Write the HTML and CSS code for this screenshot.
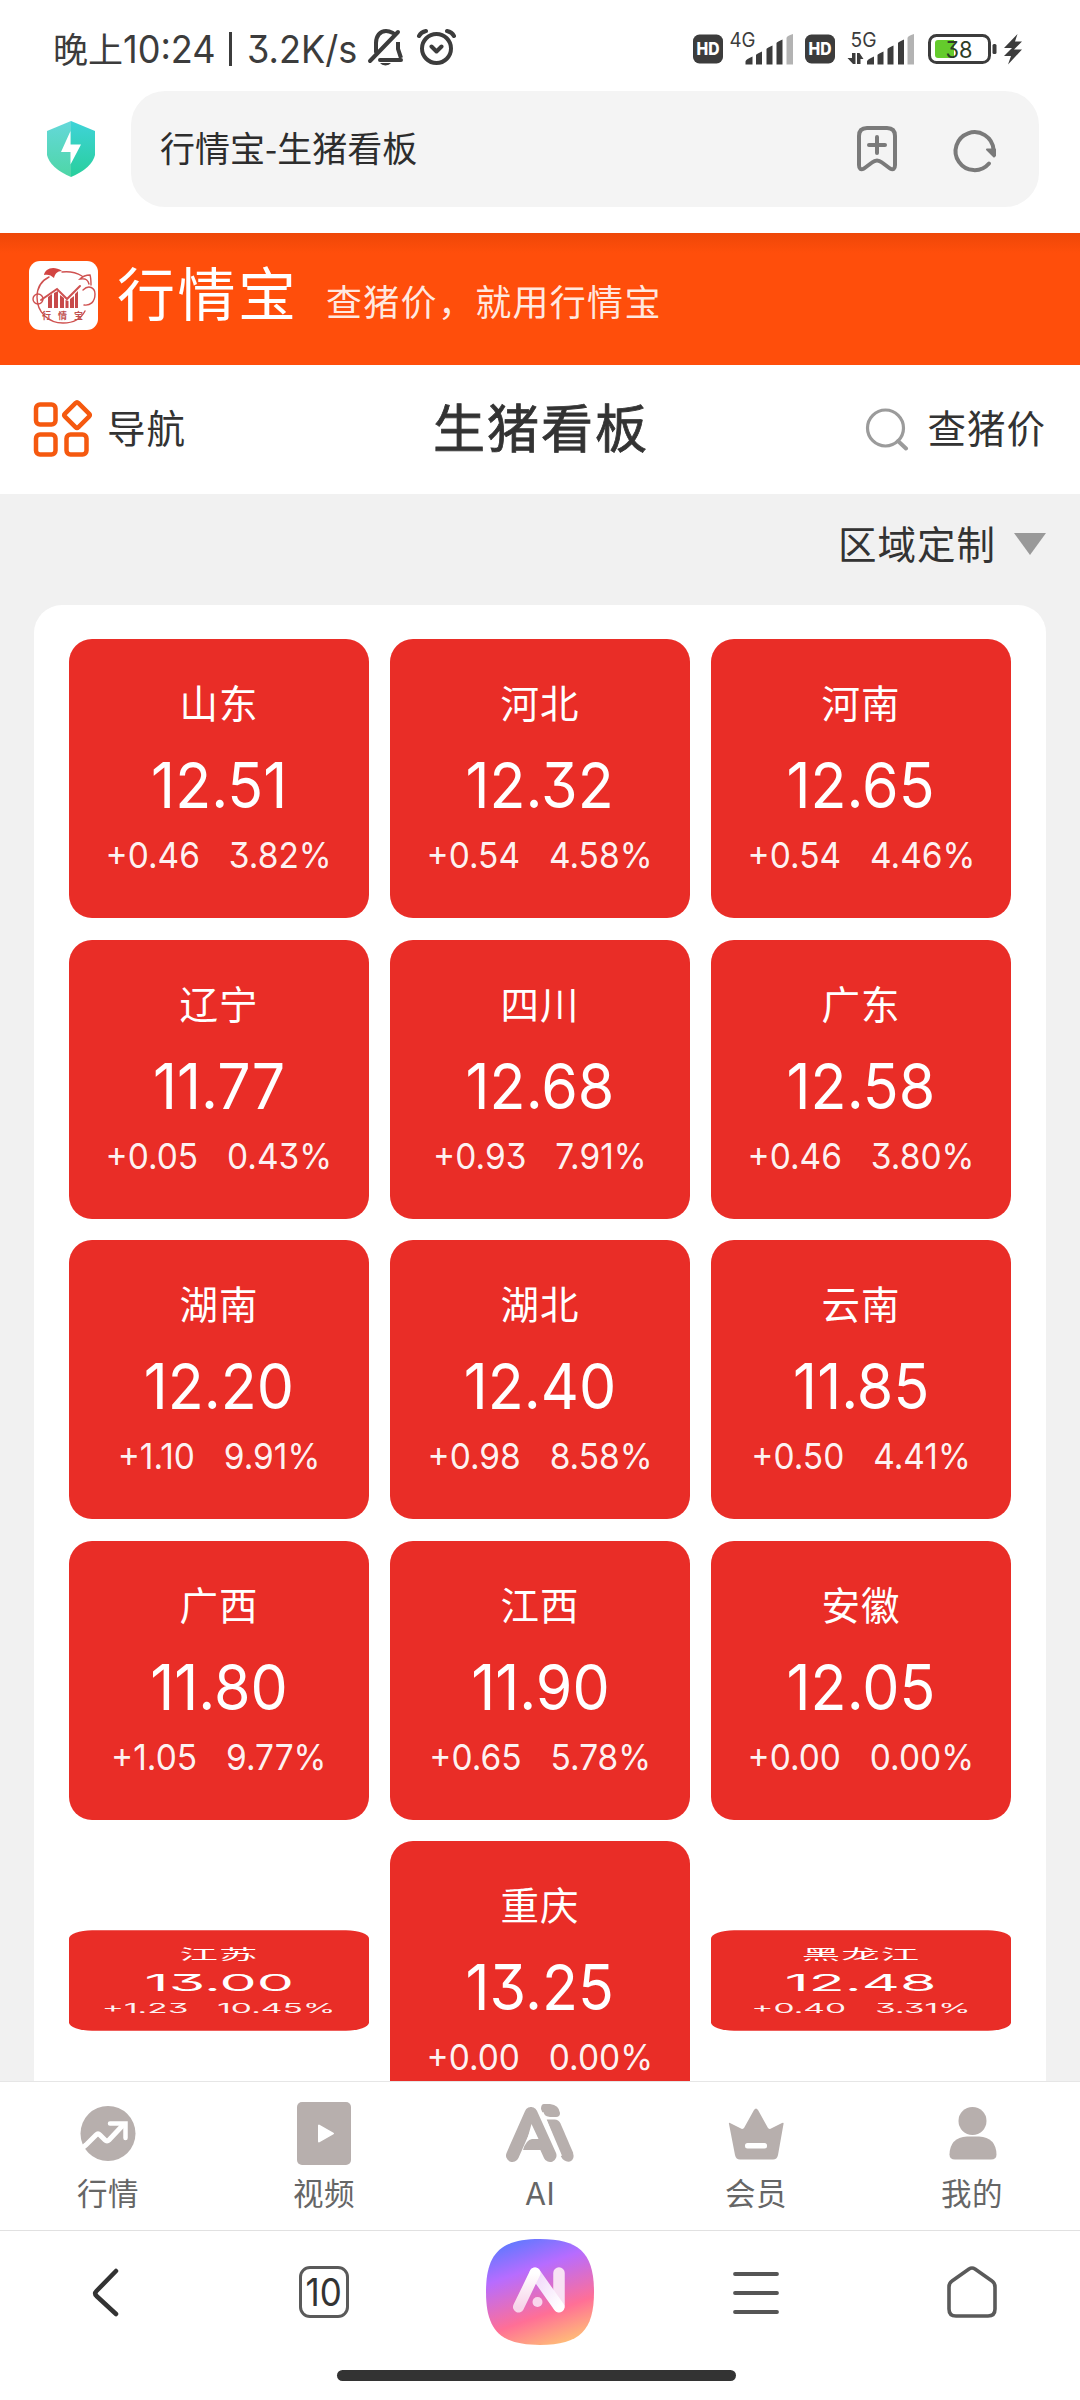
FILE: index.html
```html
<!DOCTYPE html>
<html lang="zh-CN">
<head>
<meta charset="utf-8">
<title>行情宝-生猪看板</title>
<link rel="stylesheet" href="styles.css">
</head>
<body>
<div class="screen">
  <div class="status">
    <div class="status-left">
      <span class="clock">晚上<span class="num">10:24</span></span><span class="divider"></span><span class="speed num">3.2K/s</span>
      <svg class="status-icons" width="90" height="42" viewBox="366 28 90 42" fill="none" stroke="#3c3c3c" stroke-width="4">
        <path d="M376 54V45c0-7 4-12 10-12 3 0 5 1 7 2M370 63l28-29M380 62h21" stroke-linecap="round"/>
        <path d="M398 44v7l3 9" stroke-width="4"/>
        <path d="M380 65h11a6 4 0 0 1-11 0z" fill="#3c3c3c" stroke="none"/>
        <circle cx="436.500" cy="50.500" r="14.500"/>
        <path d="M419 38q2-4 7-5M454 38q-2-4-7-5M431.500 48.500l5 5 5-5" stroke-linecap="round" stroke-linejoin="round"/>
      </svg>
    </div>
    <svg class="status-right" width="340" height="60" viewBox="690 20 340 60" fill="#3c3c3c">
      <rect x="693" y="34.500" width="30" height="29" rx="6.500"/>
      <text class="hd" x="708" y="55" textLength="23" lengthAdjust="spacingAndGlyphs">HD</text>
      <text class="net" x="729.500" y="47" textLength="26" lengthAdjust="spacingAndGlyphs">4G</text>
      <path d="M745.500 64.500v-3q0-2 7-5v8zM756 64.500V55q0-1 6-3.500v13zM766.500 64.500V49q0-1 6-3.500v19zM776.500 64.500V43q0-1 6-3.500v25z"/>
      <path d="M786.500 64.500V38q0-2 6.500-4v30.500z" fill="#b3b3b3"/>
      <rect x="805" y="34.500" width="30" height="29" rx="6.500"/>
      <text class="hd" x="820" y="55" textLength="23" lengthAdjust="spacingAndGlyphs">HD</text>
      <text class="net" x="850.500" y="47" textLength="26" lengthAdjust="spacingAndGlyphs">5G</text>
      <path d="M855.500 53v11h-2.500l-5.500-6h4.500v-5zM857 64V53h2.500l4 6h-3v5z"/>
      <path d="M867 64.500v-3q0-2 7-5v8zM877.500 64.500V55q0-1 6-3.500v13zM887.500 64.500V49q0-1 6-3.500v19zM898 64.500V43q0-1 6-3.500v25z"/>
      <path d="M907.500 64.500V38q0-2 6.500-4v30.500z" fill="#b3b3b3"/>
      <rect x="929.500" y="35.500" width="60" height="27" rx="7" fill="none" stroke="#3c3c3c" stroke-width="3"/>
      <rect x="992.500" y="44" width="4" height="10" rx="1.500"/>
      <path d="M938 40h16v18h-16q-3 0-3-3V43q0-3 3-3z" fill="#64cb2c"/>
      <text class="pct" x="945.500" y="57.500" textLength="27" lengthAdjust="spacingAndGlyphs">38</text>
      <path d="M1017.500 34l-13.500 14h8l-8 8h7l-3 8.500 14-15h-8l8-8h-7z"/>
    </svg>
  </div>

  <div class="address">
    <svg class="shield" width="50" height="58" viewBox="0 0 50 58">
      <defs>
        <linearGradient id="sl" x1="0" y1="0" x2="0" y2="1"><stop offset="0" stop-color="#64d8da"/><stop offset="1" stop-color="#4ed6a6"/></linearGradient>
        <linearGradient id="sr" x1="0" y1="0" x2="0" y2="1"><stop offset="0" stop-color="#3fd3d8"/><stop offset="1" stop-color="#28cf9c"/></linearGradient>
      </defs>
      <path d="M25 1L1 11v24q3 13 24 22z" fill="url(#sl)"/>
      <path d="M25 1l24 10v24q-3 13-24 22z" fill="url(#sr)"/>
      <path d="M24.500 11l-9.500 21h9.500v12.500L35 24.500H24.500z" fill="#fff"/>
    </svg>
    <div class="url">
      <span>行情宝-生猪看板</span>
      <svg width="150" height="60" viewBox="850 119 150 60" fill="none" stroke="#7a7a7a" stroke-width="4" stroke-linecap="round" stroke-linejoin="round">
        <path d="M859 165v-29q0-8 8-8h20q8 0 8 8v29q0 6-5 3.500l-8-6q-5-4-10 0l-8 6q-5 2.500-5-3.500zM869 145h16M877 137v16"/>
        <path d="M989 163.500a19 19 0 1 1 4.500-14"/>
        <path d="M987 149.500h8v6l-1 1z" fill="#7a7a7a" stroke-width="2"/>
      </svg>
    </div>
  </div>

  <div class="banner">
    <svg class="logo" width="69" height="69" viewBox="0 0 69 69">
      <rect width="69" height="69" rx="11" fill="#fff"/>
      <g fill="none" stroke="#cf5150" stroke-width="1.400" stroke-linecap="round">
        <path d="M20 16C12 20 8 27 8 36c0 16 12 26 26 26 10 0 18-4 22-12M33 11c8-1 15 1 20 4M62 24c0-3 0-7-1-10-5 0-8 2-10 4 6-1 8 1 9 5"/>
        <circle cx="9" cy="38" r="5"/>
        <path d="M54 29c6-6 12-2 12 4 0 8-5 12-11 11"/>
        <path d="M12 39l16-11 10 10 13-13" stroke-width="2"/>
      </g>
      <path d="M15 14C16 8 24 4 33 10c-5 0-7 3-8 7-3-3-6-4-10-3z" fill="#d24441"/>
      <path d="M19 47V36l4-3v14zM25 47V32l4-2v17zM31 47V34l4 3v10zM36.500 47v-8l3 1v7zM41 47v-9l4-3v12zM46 47V33l3-3v17z" fill="#c74a4a"/>
      <text class="logo-text" x="13" y="58">行</text><text class="logo-text" x="29" y="58">情</text><text class="logo-text" x="45" y="58">宝</text>
    </svg>
    <span class="brand">行情宝</span>
    <span class="slogan">查猪价，就用行情宝</span>
  </div>

  <div class="header">
    <div class="nav">
      <svg width="60" height="60" viewBox="0 0 60 60" fill="none" stroke="#f5590f" stroke-width="4.500" stroke-linejoin="round">
        <rect x="4" y="5.500" width="19.500" height="20" rx="4"/>
        <rect x="4" y="35.500" width="19.500" height="20" rx="4"/>
        <rect x="34.500" y="35.500" width="20" height="20" rx="4"/>
        <path d="M43.500 4.200q1.500-1.500 3 0l10.500 10.500q1.500 1.500 0 3L46.500 28.200q-1.500 1.500-3 0L33 17.700q-1.500-1.500 0-3z"/>
      </svg>
      <span>导航</span>
    </div>
    <h1>生猪看板</h1>
    <div class="search">
      <svg width="44" height="44" viewBox="0 0 44 44" fill="none" stroke="#9b9b9b" stroke-width="3.200" stroke-linecap="round">
        <circle cx="20.500" cy="21" r="18"/><path d="M33 34l8 7.500" stroke-width="4"/>
      </svg>
      <span>查猪价</span>
    </div>
  </div>

  <div class="board">
    <div class="filter"><span>区域定制</span><i class="caret"></i></div>
    <div class="panel">
      <div class="card"><b>山东</b><strong>12.51</strong><p><span>+0.46</span><span>3.82%</span></p></div>
      <div class="card"><b>河北</b><strong>12.32</strong><p><span>+0.54</span><span>4.58%</span></p></div>
      <div class="card"><b>河南</b><strong>12.65</strong><p><span>+0.54</span><span>4.46%</span></p></div>
      <div class="card"><b>辽宁</b><strong>11.77</strong><p><span>+0.05</span><span>0.43%</span></p></div>
      <div class="card"><b>四川</b><strong>12.68</strong><p><span>+0.93</span><span>7.91%</span></p></div>
      <div class="card"><b>广东</b><strong>12.58</strong><p><span>+0.46</span><span>3.80%</span></p></div>
      <div class="card"><b>湖南</b><strong>12.20</strong><p><span>+1.10</span><span>9.91%</span></p></div>
      <div class="card"><b>湖北</b><strong>12.40</strong><p><span>+0.98</span><span>8.58%</span></p></div>
      <div class="card"><b>云南</b><strong>11.85</strong><p><span>+0.50</span><span>4.41%</span></p></div>
      <div class="card"><b>广西</b><strong>11.80</strong><p><span>+1.05</span><span>9.77%</span></p></div>
      <div class="card"><b>江西</b><strong>11.90</strong><p><span>+0.65</span><span>5.78%</span></p></div>
      <div class="card"><b>安徽</b><strong>12.05</strong><p><span>+0.00</span><span>0.00%</span></p></div>
      <div class="card flip"><b>江苏</b><strong>13.00</strong><p><span>+1.23</span><span>10.45%</span></p></div>
      <div class="card"><b>重庆</b><strong>13.25</strong><p><span>+0.00</span><span>0.00%</span></p></div>
      <div class="card flip"><b>黑龙江</b><strong>12.48</strong><p><span>+0.40</span><span>3.31%</span></p></div>
    </div>
  </div>

  <div class="tabs">
    <div class="tab">
      <svg width="72" height="68" viewBox="0 0 72 68">
        <ellipse cx="36" cy="34.500" rx="27.500" ry="27.500" fill="#b7afad"/>
        <path d="M9 50l5-4 10-10q2-2 4 0l5 5q2 2 4 0l15-16" fill="none" stroke="#fff" stroke-width="5"/>
        <path d="M38 24.500h15.500V39" fill="none" stroke="#fff" stroke-width="4.500" stroke-linecap="round"/>
      </svg>
      <span>行情</span>
    </div>
    <div class="tab">
      <svg width="72" height="68" viewBox="0 0 72 68">
        <rect x="9" y="3" width="54" height="63" rx="5" fill="#b7afad"/>
        <path d="M31 26.500v16l14-8z" fill="#fff" stroke="#fff" stroke-width="2" stroke-linejoin="round"/>
      </svg>
      <span>视频</span>
    </div>
    <div class="tab">
      <svg width="72" height="68" viewBox="0 0 72 68" fill="#b7afad">
        <path d="M8.500 56.500L27 14.500M27 14.500L46 56.500" stroke="#b7afad" stroke-width="13" stroke-linecap="round" fill="none"/>
        <path d="M27.500 25l7 15h-5q-4 0-7 3z" fill="#fff"/>
        <path d="M19 51q3-10 9-11h10v11z"/>
        <path d="M40 5h6q9 1 10 9 0 4-4 4h-6q-7-1-9-8 0-5 3-5z"/>
        <path d="M42.500 20.500h8q4 0 6 4l12.500 29q2 7-3 9-6 1-9-5z"/>
        <path d="M38.500 13.500L57 57" stroke="#fff" stroke-width="2" fill="none"/>
      </svg>
      <span class="latin">AI</span>
    </div>
    <div class="tab">
      <svg width="72" height="68" viewBox="0 0 72 68">
        <path d="M10 24l12 6q1 0 2-1l10-18q2-3 4 0l10 18q1 1 2 1l12-6q2-1 1.500 1L58 56q-1 4.500-5 4.500H20q-4 0-5-4.500L9 25q-.5-2 1-1z" fill="#b7afad"/>
        <rect x="25" y="44" width="22" height="5.500" rx="2.500" fill="#fff"/>
      </svg>
      <span>会员</span>
    </div>
    <div class="tab">
      <svg width="72" height="68" viewBox="0 0 72 68" fill="#b7afad">
        <circle cx="36.500" cy="22" r="14"/>
        <path d="M31 37.500h12q17 1 17.500 18 0 5-5.500 5H19q-5.500 0-5.500-5 .5-17 17.500-18z"/>
      </svg>
      <span>我的</span>
    </div>
  </div>

  <div class="browser">
    <div class="tool"><svg width="72" height="80" viewBox="0 0 72 80" fill="none" stroke="#333" stroke-width="4.500" stroke-linecap="round" stroke-linejoin="round"><path d="M44 19L24.500 39q-2.500 2.500 0 5L44 62"/></svg></div>
    <div class="tool"><span class="count"><span>10</span></span></div>
    <div class="tool">
      <svg width="110" height="108" viewBox="0 0 110 108">
        <defs>
          <linearGradient id="ai" x1=".32" y1="0" x2=".68" y2="1"><stop offset="0" stop-color="#6478ff"/><stop offset=".28" stop-color="#b76cff"/><stop offset=".7" stop-color="#ff6f96"/><stop offset="1" stop-color="#ffbc78"/></linearGradient>
          <linearGradient id="leg" x1="0" y1="0" x2="0" y2="1"><stop offset="0" stop-color="#fff"/><stop offset="1" stop-color="#f7d5ea"/></linearGradient>
          <linearGradient id="mid" x1="0" y1="0" x2="1" y2="1"><stop offset="0" stop-color="#f0d6fa"/><stop offset="1" stop-color="#fff"/></linearGradient>
        </defs>
        <path d="M55 1C95 1 109 16 109 54s-14 53-54 53S1 92 1 54 15 1 55 1z" fill="url(#ai)"/>
        <path d="M74 68V35" stroke="#f8e2f4" stroke-width="11.500" stroke-linecap="round"/>
        <path d="M50 35L74 69" stroke="url(#mid)" stroke-width="11" stroke-linecap="round"/>
        <path d="M50 35L33.500 69" stroke="url(#leg)" stroke-width="11" stroke-linecap="round"/>
        <circle cx="52.500" cy="64" r="5" fill="#f9d5ec"/>
      </svg>
    </div>
    <div class="tool"><svg width="72" height="80" viewBox="0 0 72 80" stroke="#555" stroke-width="3.800" stroke-linecap="round"><path d="M15 22h42M15 41h42M15 60h42"/></svg></div>
    <div class="tool"><svg width="72" height="80" viewBox="0 0 72 80" fill="none" stroke="#5a5a5a" stroke-width="3.600" stroke-linejoin="round"><path d="M33 17q3-2 6 0l17 12q3 2 3 6v22q0 7-7 7H20q-7 0-7-7V35q0-4 3-6z"/></svg></div>
  </div>
  <div class="home"><i></i></div>
</div>
</body>
</html>
```
FILE: styles.css
```css
* { box-sizing: border-box; }
body {
  margin: 0;
  background: #fff;
  color: #333;
  font-family: "Noto Sans CJK SC", sans-serif;
}
svg { display: block; flex: none; }
.screen {
  width: 1080px;
  height: 2400px;
  display: flex;
  flex-direction: column;
  overflow: hidden;
}

/* status bar */
.status {
  height: 91px;
  padding: 7px 50px 0 53px;
  display: flex;
  justify-content: space-between;
  align-items: center;
  color: #3c3c3c;
}
.status-left { display: flex; align-items: center; font-size: 35px; line-height: 50px; white-space: nowrap; }
.num { font-family: "Inter", sans-serif; font-feature-settings: "cv09"; }
.clock { margin-top: -2px; }
.clock .num { display: inline-block; width: 98px; font-size: 38px; transform: scaleX(.95); transform-origin: left; }
.divider { width: 3px; height: 34px; margin: 0 15px 0 8px; background: #3c3c3c; }
.speed { width: 119px; margin-top: -1px; font-size: 38px; transform: scaleX(.95); transform-origin: left; }
.status-icons { margin-top: -4px; }
.status-right { margin-top: 1px; }
.hd { font: 800 17px "Inter", sans-serif; fill: #fff; text-anchor: middle; }
.net { font: 400 20px "Inter", sans-serif; }
.pct { font: 400 23px "Inter", sans-serif; font-feature-settings: "cv09"; fill: #2d3d26; }

/* address bar */
.address { height: 142px; padding: 0 41px 0 46px; display: flex; align-items: flex-start; }
.shield { margin: 29px 35px 0 0; }
.url {
  flex: 1;
  height: 116px;
  padding: 0 39px 0 29px;
  display: flex;
  align-items: center;
  justify-content: space-between;
  border-radius: 34px;
  background: #f4f4f4;
  color: #2d2d2d;
  font-size: 35px;
}
.url span { margin-top: -6px; }

/* brand banner */
.banner {
  height: 132px;
  padding-left: 29px;
  display: flex;
  align-items: center;
  background: linear-gradient(#ee4708, #ff4e0b 20px);
  color: #fff;
}
.logo { margin-top: -7px; }
.logo-text { font: 700 9px "Noto Sans CJK SC", sans-serif; fill: #c0504e; }
.brand { width: 209px; margin: -17px 0 0 19px; font-size: 58px; line-height: 80px; letter-spacing: 2.500px; }
.slogan { font-size: 36px; line-height: 50px; letter-spacing: 1.300px; margin-top: 2px; color: rgba(255,255,255,.88); }

/* page header */
.header {
  height: 129px;
  padding: 0 34px 2px 32px;
  display: grid;
  grid-template-columns: 1fr auto 1fr;
  align-items: center;
  font-size: 38.500px;
  letter-spacing: 1px;
}
.header span { margin-top: -6px; }
.nav, .search { display: flex; align-items: center; }
.nav { gap: 15px; }
.search { justify-content: flex-end; gap: 18px; }
.header h1 {
  margin: -6px 0 0 4px;
  font-size: 52px;
  font-weight: 400;
  letter-spacing: 2px;
  -webkit-text-stroke: .8px #333;
}

/* price board */
.board { height: 1587px; padding: 0 34px; background: #f1f1f1; overflow: hidden; }
.filter {
  height: 111px;
  padding-bottom: 11px;
  display: flex;
  align-items: center;
  justify-content: flex-end;
  gap: 18px;
  font-size: 38.500px;
  letter-spacing: 1px;
}
.filter span { margin-top: -4px; }
.caret { width: 32px; height: 22px; background: #999; clip-path: polygon(0 0, 100% 0, 50% 100%); }
.panel {
  padding: 34px 35px;
  display: grid;
  grid-template-columns: repeat(3, 300px);
  grid-auto-rows: 279px;
  gap: 21.500px 21px;
  border-radius: 28px;
  background: #fff;
}
.card {
  padding-top: 32px;
  display: flex;
  flex-direction: column;
  align-items: center;
  border-radius: 23px;
  background: #e92d27;
  color: #fff;
}
.card b { font-weight: 400; font-size: 38.500px; line-height: 60px; letter-spacing: 1px; }
.card strong {
  margin-top: 2px;
  font: 400 63.500px/104px "Inter", sans-serif;
  font-feature-settings: "cv09";
  transform: scaleX(.93);
}
.card p {
  margin: 0;
  display: flex;
  gap: 31px;
  font: 400 36px/37px "Inter", sans-serif;
  font-feature-settings: "cv09";
  transform: scaleX(.93);
  color: rgba(255,255,255,.95);
}
.flip { transform: scaleY(.36); }

/* site tabs */
.tabs { height: 150px; display: grid; grid-template-columns: repeat(5, 1fr); border-top: 1px solid #e6e6e6; border-bottom: 1px solid #e1e1e1; }
.tab { display: flex; flex-direction: column; align-items: center; padding-top: 17px; font-size: 30.500px; line-height: 44px; color: #666; }
.tab span { margin-top: 3px; letter-spacing: .5px; }
.tab .latin { margin-top: 5px; font-family: "Inter", sans-serif; }

/* browser toolbar */
.browser { height: 122px; display: grid; grid-template-columns: repeat(5, 1fr); }
.tool { display: flex; justify-content: center; align-items: center; }
.count {
  width: 50px;
  height: 52px;
  border: 3.500px solid #5a5a5a;
  border-radius: 11px;
  display: flex;
  align-items: center;
  justify-content: center;
  font: 400 38px/44px "Inter", sans-serif;
}
.count span { transform: scaleX(.92); }
.home { flex: 1; display: flex; justify-content: center; padding: 17px 7px 0 0; }
.home i { width: 399px; height: 11px; border-radius: 6px; background: #333; }
```
